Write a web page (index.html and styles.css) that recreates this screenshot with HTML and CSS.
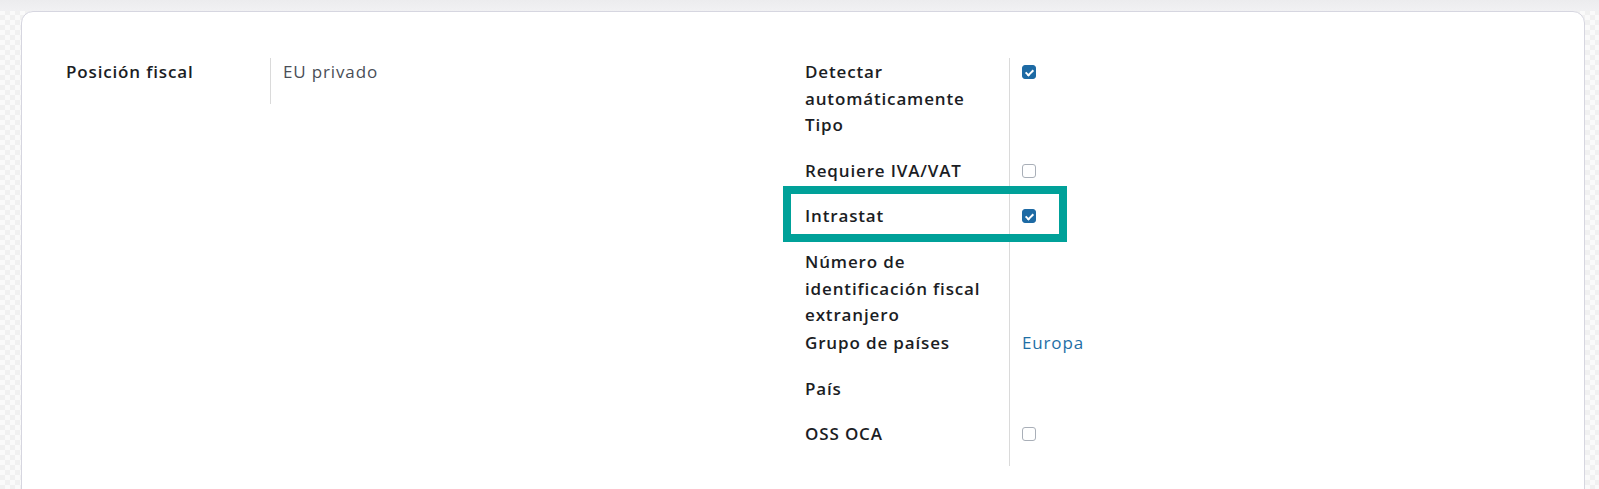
FILE: index.html
```html
<!DOCTYPE html>
<html lang="es">
<head>
<meta charset="utf-8">
<title>Posición fiscal</title>
<link rel="stylesheet" href="styles.css">
</head>
<body>
<div class="topbar"></div>
<div class="card">
  <div class="groups">
    <div class="group">
      <div class="row">
        <div class="label">Posición fiscal</div>
        <div class="value muted">EU privado</div>
      </div>
    </div>
    <div class="group">
      <div class="row">
        <div class="label">Detectar automáticamente Tipo</div>
        <div class="value"><span class="cb checked"></span></div>
      </div>
      <div class="row">
        <div class="label">Requiere IVA/VAT</div>
        <div class="value"><span class="cb"></span></div>
      </div>
      <div class="row highlighted">
        <div class="label">Intrastat</div>
        <div class="value"><span class="cb checked"></span></div>
        <div class="highlight"></div>
      </div>
      <div class="row tight">
        <div class="label">Número de identificación fiscal extranjero</div>
        <div class="value"></div>
      </div>
      <div class="row">
        <div class="label">Grupo de países</div>
        <div class="value"><a class="link" href="#">Europa</a></div>
      </div>
      <div class="row">
        <div class="label">País</div>
        <div class="value"></div>
      </div>
      <div class="row">
        <div class="label">OSS OCA</div>
        <div class="value"><span class="cb"></span></div>
      </div>
    </div>
  </div>
</div>
</body>
</html>
```
FILE: styles.css
```css
html, body {
  margin: 0;
  padding: 0;
}
body {
  width: 1599px;
  height: 489px;
  overflow: hidden;
  font-family: "Open Sans", "Noto Sans", sans-serif;
  letter-spacing: 0.85px;
  color: #1b1d24;
  background-color: #f7f7f7;
  background-image: repeating-conic-gradient(#f1f1f1 0% 25%, #fafafa 0% 50%);
  background-size: 10px 10px;
  position: relative;
}
.topbar {
  height: 11px;
  background: linear-gradient(#ececee, #f1f1f3);
}
.card {
  margin-left: 21px;
  width: 1564px;
  height: 520px;
  box-sizing: border-box;
  background: #ffffff;
  border: 1px solid #d6d6e0;
  border-radius: 12px;
  padding: 46px 0 0 44px;
}
.groups {
  display: grid;
  grid-template-columns: 739px 739px;
}
.row {
  display: grid;
  grid-template-columns: 205px 1fr;
  font-size: 17px;
  line-height: 26.7px;
  position: relative;
}
.label {
  box-sizing: border-box;
  font-weight: 600;
  padding: 1px 14px 17.8px 0;
  border-right: 1px solid #dadada;
}
.row.tight .label {
  padding-bottom: 0;
}
.value {
  padding: 1px 0 0 12px;
}
.muted {
  color: #4a4e57;
}
.link {
  color: #1e6fa6;
  text-decoration: none;
}
.cb {
  display: inline-block;
  width: 14px;
  height: 14px;
  box-sizing: border-box;
  border: 1px solid #a9afb8;
  border-radius: 3px;
  background: #fff;
  vertical-align: -1px;
  position: relative;
}
.cb.checked {
  background: #1d6aa4;
  border-color: #1d6aa4;
}
.cb.checked::after {
  content: "";
  position: absolute;
  left: 4px;
  top: 2px;
  width: 3px;
  height: 6px;
  border: solid #fff;
  border-width: 0 2px 2px 0;
  transform: rotate(45deg);
}
.highlight {
  position: absolute;
  left: -22px;
  top: -16px;
  width: 284px;
  height: 56px;
  box-sizing: border-box;
  border: 8px solid #00a199;
  pointer-events: none;
}
```
